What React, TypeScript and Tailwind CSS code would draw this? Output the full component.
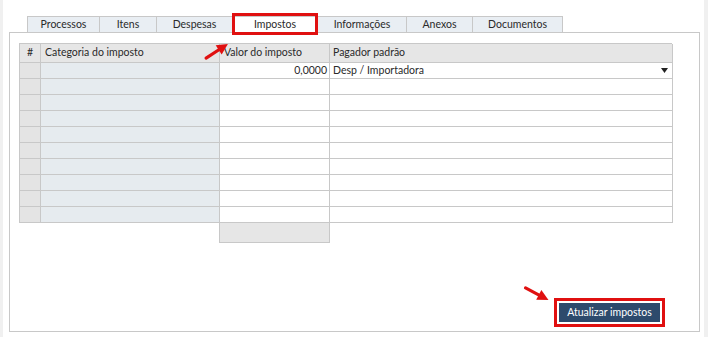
import React from 'react';

const tabs = [
  { label: 'Processos', w: 'w-[73px]' },
  { label: 'Itens', w: 'w-[57px]' },
  { label: 'Despesas', w: 'w-[76px]' },
  { label: 'Impostos', w: 'w-[85px]', active: true },
  { label: 'Informações', w: 'w-[89px]' },
  { label: 'Anexos', w: 'w-[66px]' },
  { label: 'Documentos', w: 'w-[90px]' },
];

const rows = Array.from({ length: 10 }, (_, i) => i);

function Arrow({ className, rotate }: { className: string; rotate: number }) {
  return (
    <svg className={className} width="30" height="30" viewBox="0 0 30 30">
      <g transform={`rotate(${rotate} 15 15)`}>
        <line x1="2" y1="15" x2="20" y2="15" stroke="#e01010" strokeWidth="3.2" strokeLinecap="round" />
        <polygon points="28,15 17,9.5 17,20.5" fill="#e01010" />
      </g>
    </svg>
  );
}

export default function App() {
  return (
    <div
      className="relative flex w-[708px] h-[337px] bg-white text-[10.5px] text-[#2a2a2a]"
      style={{ fontFamily: 'Lato, "Noto Sans", Arial, sans-serif' }}
    >
      <div className="w-[3px] bg-[#f0f0f0]" />
      <div className="flex flex-col pl-[6px] pt-[16px] w-[696px]">
        {/* tabs */}
        <div className="flex ml-[18px] h-[17px] relative z-10">
          {tabs.map((t) => (
            <div
              key={t.label}
              className={`${t.w} relative flex items-center justify-center border-t border-r first:border-l border-[#c8c8c8] ${
                t.active ? 'bg-white' : 'bg-[#e9eef3] border-b'
              }`}
            >
              {t.label}
              {t.active && (
                <div className="absolute left-[-1px] right-[-1px] top-[-4px] bottom-[-2px] border-[3px] border-[#e01010]" />
              )}
            </div>
          ))}
        </div>
        {/* panel */}
        <div className="flex flex-col -mt-px w-[691px] h-[300px] border border-[#c8c8c8] pl-[9px] pt-[10px]">
          <div className="grid grid-cols-[21px_179px_110px_343px] w-[653px] border-l border-t border-[#c8c8c8]">
            <div className="h-[19px] bg-[#e6e6e6] border-r border-b border-[#c8c8c8] flex items-center justify-center">#</div>
            <div className="h-[19px] bg-[#e6e6e6] border-r border-b border-[#c8c8c8] flex items-center pl-[4px]">Categoria do imposto</div>
            <div className="h-[19px] bg-[#e6e6e6] border-r border-b border-[#c8c8c8] flex items-center pl-[4px]">Valor do imposto</div>
            <div className="h-[19px] bg-[#e6e6e6] border-r border-b border-[#c8c8c8] flex items-center pl-[3px]">Pagador padrão</div>
            {rows.map((i) => (
              <React.Fragment key={i}>
                <div className="h-[16px] bg-[#e4e4e4] border-r border-b border-[#c8c8c8]" />
                <div className="h-[16px] bg-[#e6ebef] border-r border-b border-[#c8c8c8]" />
                <div className="h-[16px] bg-white border-r border-b border-[#c8c8c8] flex items-center justify-end pr-[2px]">
                  {i === 0 ? '0,0000' : ''}
                </div>
                <div className="h-[16px] bg-white border-r border-b border-[#c8c8c8] flex items-center justify-between pl-[3px] pr-[4px]">
                  {i === 0 && (
                    <>
                      <span>Desp / Importadora</span>
                      <svg width="7" height="5" viewBox="0 0 7 5">
                        <polygon points="0,0 7,0 3.5,5" fill="#222" />
                      </svg>
                    </>
                  )}
                </div>
              </React.Fragment>
            ))}
          </div>
          <div className="ml-[200px] w-[111px] h-[20px] bg-[#e6e6e6] border border-t-0 border-[#c8c8c8]" />
          <div className="flex-1" />
          <div className="flex justify-end pr-[34px] pb-[4px]">
            <div className="border-[3px] border-[#e01010] p-[2px] bg-white">
              <button className="w-[101px] h-[19px] bg-[#2d4a6c] text-white text-[10.5px] flex items-center justify-center">
                Atualizar impostos
              </button>
            </div>
          </div>
        </div>
      </div>
      <div className="ml-auto w-[4px] bg-[#f0f0f0]" />
      <Arrow className="absolute left-[202px] top-[36px] z-20" rotate={-33} />
      <Arrow className="absolute left-[522px] top-[279px] z-20" rotate={28} />
    </div>
  );
}
